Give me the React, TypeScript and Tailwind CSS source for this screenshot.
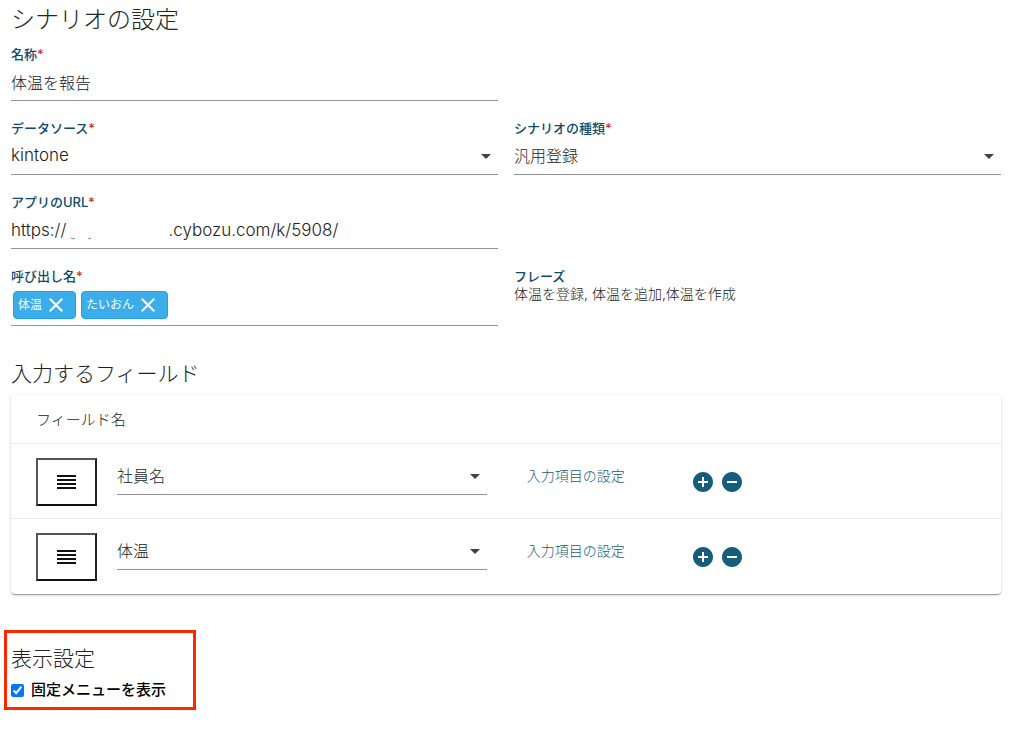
import type { ReactNode } from "react";
import { MdAddCircle, MdArrowDropDown, MdClose, MdRemoveCircle } from "react-icons/md";

const labelClass = "block h-4 text-[13px] leading-4 font-medium text-[#0d4a6b]";
const controlClass =
  "block h-[39px] w-full rounded-none border-0 border-b border-[#949494] bg-transparent p-0 pt-0.5 font-light text-[#222] outline-none";

function Required() {
  return <span className="text-[#d32f2f]">*</span>;
}

function SelectBox({ id, label, value, latin = false }: { id: string; label?: string; value: string; latin?: boolean }) {
  return (
    <div className="relative">
      <select
        id={id}
        aria-label={label}
        className={`${controlClass} appearance-none pr-6 ${latin ? "text-[17px]" : "text-base"}`}
        defaultValue={value}
      >
        <option>{value}</option>
      </select>
      <MdArrowDropDown className="pointer-events-none absolute top-2 right-0 size-6 text-[#424242]" />
    </div>
  );
}

function Field({ id, label, children }: { id: string; label: string; children: ReactNode }) {
  return (
    <div>
      <label htmlFor={id} className={labelClass}>
        {label}
        <Required />
      </label>
      {children}
    </div>
  );
}

function Chip({ text }: { text: string }) {
  return (
    <span className="flex h-7 items-center gap-0.5 rounded-[4px] border border-[#1fa2e8] bg-[#3aadea] pr-[7px] pl-1 text-[12px] text-white">
      {text}
      <button type="button" aria-label={`${text}を削除`}>
        <MdClose className="size-6" />
      </button>
    </span>
  );
}

function DragIcon() {
  return (
    <svg viewBox="0 0 20 16" className="h-4 w-5" fill="#111" aria-hidden="true">
      <path d="M0 1h19v2H0zM0 5h19v2H0zM0 9h19v2H0zM0 13h19v2H0z" />
    </svg>
  );
}

function FieldRow({ name, index }: { name: string; index: number }) {
  return (
    <tr className="h-[75px] border-t border-[#ebebeb] align-top">
      <td className="pt-3.5 pl-[25px]">
        <button
          type="button"
          aria-label="並べ替え"
          className="flex h-12 w-[61px] items-center justify-center border-2 border-t-[#555] border-r-[#222] border-b-[#111] border-l-[#555]"
        >
          <DragIcon />
        </button>
      </td>
      <td className="pt-3 pr-10">
        <SelectBox id={`field-${index}`} label="フィールド名" value={name} />
      </td>
      <td className="pt-5">
        <a href="#settings" className="block text-sm leading-6 font-light text-[#1c5a7d]">
          入力項目の設定
        </a>
      </td>
      <td className="pt-[26px]">
        <div className="flex gap-[5px] text-[#155e7b]">
          <button type="button" aria-label="追加">
            <MdAddCircle className="size-6" />
          </button>
          <button type="button" aria-label="削除">
            <MdRemoveCircle className="size-6" />
          </button>
        </div>
      </td>
    </tr>
  );
}

export default function App() {
  return (
    <main className="bg-white pt-2 pr-[23px] pb-6 pl-1 font-['Inter','Noto_Sans_CJK_JP',sans-serif] text-[#222]">
      <div className="pl-[7px]">
        <h1 className="text-2xl leading-6 font-light">シナリオの設定</h1>

        <form className="mt-3.5 grid grid-cols-2 gap-x-4 gap-y-[19px]">
          <div className="col-start-1">
            <Field id="name" label="名称">
              <input id="name" className={`${controlClass} text-base`} defaultValue="体温を報告" />
            </Field>
          </div>
          <div className="col-start-1">
            <Field id="source" label="データソース">
              <SelectBox id="source" value="kintone" latin />
            </Field>
          </div>
          <Field id="kind" label="シナリオの種類">
            <SelectBox id="kind" value="汎用登録" />
          </Field>
          <div className="col-start-1">
            <Field id="url" label="アプリのURL">
              <div className="relative">
                <input
                  id="url"
                  className={`${controlClass} text-[17px]`}
                  defaultValue={"https://" + "\u2003".repeat(6) + ".cybozu.com/k/5908/"}
                />
                <svg viewBox="0 0 24 4" className="absolute bottom-2 left-[60px] h-1 w-6" fill="none" stroke="#888" aria-hidden="true">
                  <path d="M0 1q2 2 4 0M17 1q2 2 3 0" />
                </svg>
              </div>
            </Field>
          </div>
          <div className="col-start-1">
            <span className={labelClass}>
              呼び出し名
              <Required />
            </span>
            <div className="flex gap-[5px] border-b border-[#949494] px-0.5 pt-[7px] pb-1.5">
              <Chip text="体温" />
              <Chip text="たいおん" />
            </div>
          </div>
          <div>
            <span className={labelClass}>フレーズ</span>
            <p className="text-sm leading-5 font-light">体温を登録, 体温を追加,体温を作成</p>
          </div>
        </form>

        <h2 className="mt-[34px] text-[21px] leading-7 font-light">入力するフィールド</h2>
        <div className="mt-[7px] rounded-[4px] pb-px shadow-[0_2px_1px_-1px_rgba(0,0,0,0.2),0_1px_1px_0_rgba(0,0,0,0.14),0_1px_3px_0_rgba(0,0,0,0.2)]">
          <table className="w-full table-fixed border-collapse">
            <colgroup>
              <col className="w-[106px]" />
              <col className="w-[41.4%]" />
              <col className="w-[164px]" />
              <col />
            </colgroup>
            <thead>
              <tr className="h-12">
                <th colSpan={4} className="pt-0.5 pl-[25px] text-left text-[15px] font-light">
                  フィールド名
                </th>
              </tr>
            </thead>
            <tbody>
              <FieldRow name="社員名" index={1} />
              <FieldRow name="体温" index={2} />
            </tbody>
          </table>
        </div>
      </div>

      <section className="mt-9 h-20 w-48 border-3 border-[#ff2600] pt-3 pl-1">
        <h2 className="text-[21px] leading-7 font-light">表示設定</h2>
        <label className="mt-[7px] flex items-center gap-[7px] text-[15px] leading-5 font-medium text-black">
          <input type="checkbox" defaultChecked className="size-[13px]" />
          固定メニューを表示
        </label>
      </section>
    </main>
  );
}
